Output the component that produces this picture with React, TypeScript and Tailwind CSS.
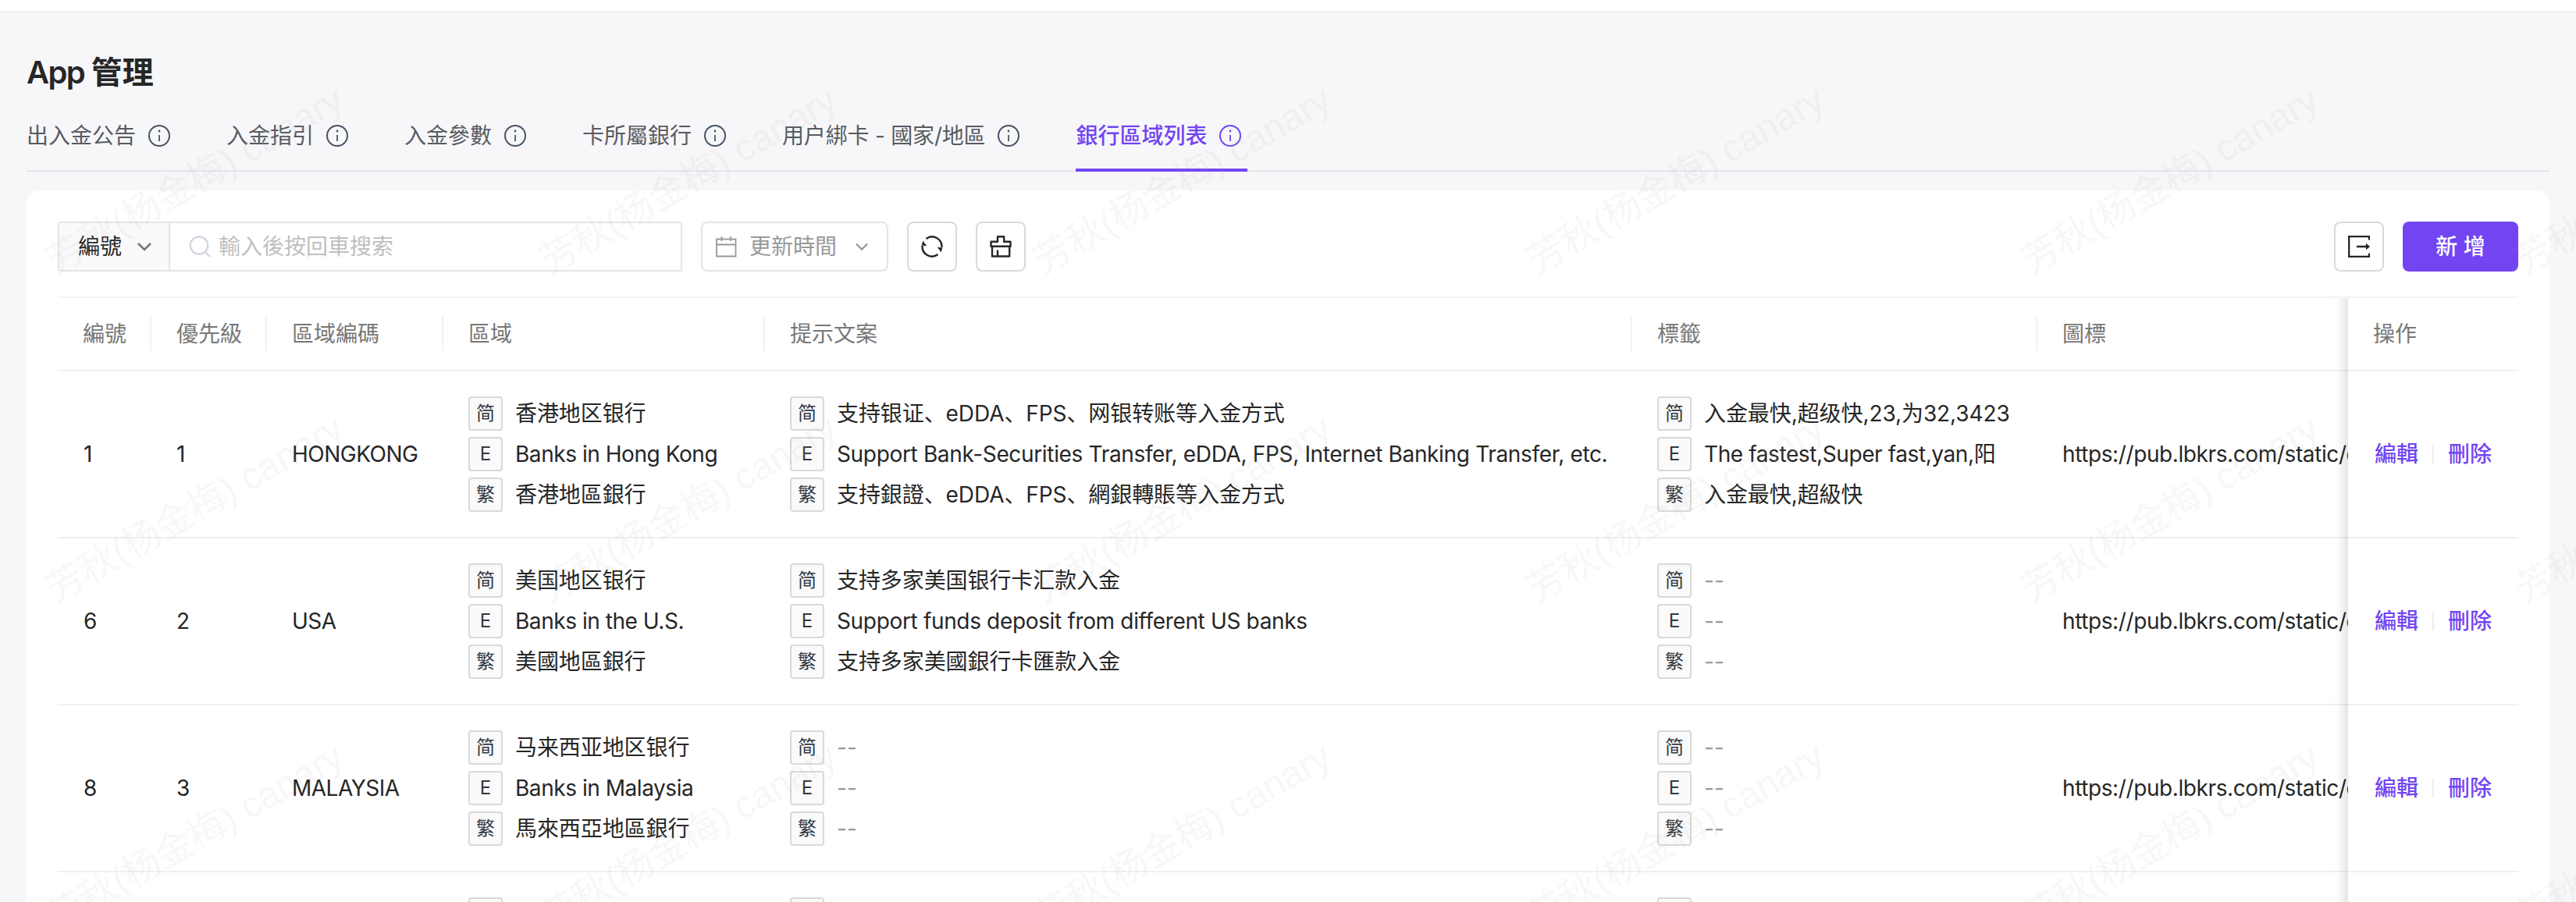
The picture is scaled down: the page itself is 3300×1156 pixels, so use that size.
import React from "react";

function InfoIcon({ className }: { className: string }) {
  return (
    <svg viewBox="0 0 28 28" className={`ml-4 mr-2 size-7 ${className}`} fill="none" stroke="currentColor" strokeWidth="2">
      <circle cx="14" cy="14" r="13" />
      <path d="M14 13v8" strokeWidth="1.8" />
      <circle cx="14" cy="8" r="1.4" fill="currentColor" stroke="none" />
    </svg>
  );
}

function ChevronDown({ className }: { className: string }) {
  return (
    <svg viewBox="0 0 18 18" className={className} fill="none" stroke="currentColor" strokeWidth="2.6">
      <path d="M1 5l8 8 8-8" />
    </svg>
  );
}

const tabs = ["出入金公告", "入金指引", "入金參數", "卡所屬銀行", "用户綁卡 - 國家/地區", "銀行區域列表"];

type Texts = [string, string, string];
type Row = { id: string; order: string; code: string; region: Texts; hint: Texts; label: Texts };

const none: Texts = ["--", "--", "--"];
const rows: Row[] = [
  {
    id: "1",
    order: "1",
    code: "HONGKONG",
    region: ["香港地区银行", "Banks in Hong Kong", "香港地區銀行"],
    hint: [
      "支持银证、eDDA、FPS、网银转账等入金方式",
      "Support Bank-Securities Transfer, eDDA, FPS, Internet Banking Transfer, etc.",
      "支持銀證、eDDA、FPS、網銀轉賬等入金方式",
    ],
    label: ["入金最快,超级快,23,为32,3423", "The fastest,Super fast,yan,阳", "入金最快,超級快"],
  },
  {
    id: "6",
    order: "2",
    code: "USA",
    region: ["美国地区银行", "Banks in the U.S.", "美國地區銀行"],
    hint: ["支持多家美国银行卡汇款入金", "Support funds deposit from different US banks", "支持多家美國銀行卡匯款入金"],
    label: none,
  },
  {
    id: "8",
    order: "3",
    code: "MALAYSIA",
    region: ["马来西亚地区银行", "Banks in Malaysia", "馬來西亞地區銀行"],
    hint: none,
    label: none,
  },
];

const langs = ["简", "E", "繁"];

function LangCell({ texts, english }: { texts: Texts; english: string }) {
  return (
    <div className="flex flex-col gap-2 pl-8">
      {texts.map((t, i) => (
        <div key={i} className="flex h-11 items-center gap-4 whitespace-nowrap">
          <span className="flex size-11 shrink-0 items-center justify-center rounded border-2 border-[#d9d9d9] bg-[#fafafa] text-2xl text-[#333842]">
            {langs[i]}
          </span>
          <span className={t === "--" ? "text-[#999]" : i === 1 ? english : "tracking-[-0.08px]"}>{t}</span>
        </div>
      ))}
    </div>
  );
}

function LangBadge() {
  return (
    <div className="pl-8">
      <div className="size-11 rounded border-2 border-[#d9d9d9] bg-[#fafafa]" />
    </div>
  );
}

const cols = "grid grid-cols-[120px_148px_226px_412px_1111px_519px_398px_218px]";

const heads = ["編號", "優先級", "區域編碼", "區域", "提示文案", "標籤", "圖標"];

export default function App() {
  return (
    <div className="relative h-[1156px] w-[3300px] overflow-hidden bg-[#f7f7fa] font-['Inter','Noto_Sans_CJK_SC',sans-serif] text-[28px] leading-[44px] text-[#262626]">
      <div className="h-4 border-b-2 border-[#f0f0f0] bg-white" />
      <main className="px-[34px]">
        <h1 className="pt-[49px] text-[40px] leading-[56px] font-semibold">
          <span className="tracking-[-1.6px]">App </span>管理
        </h1>
        <nav className="mt-[31px] flex h-[68px] gap-16 border-b-2 border-[#e6e6ea] text-[#575b61]">
          {tabs.map((t, i) => (
            <div
              key={t}
              className={
                i === 5
                  ? "flex h-[68px] items-start border-b-4 border-[#7345f2] font-medium text-[#7345f2]"
                  : "flex h-[68px] items-start"
              }
            >
              <div className="flex h-11 items-center">
                <span className={i === 4 ? "tracking-[-0.2px]" : ""}>{t}</span>
                <InfoIcon className={i === 5 ? "text-[#7345f2]" : "text-[#475467]"} />
              </div>
            </div>
          ))}
        </nav>

        <section className="mt-6 h-[940px] rounded-t-2xl bg-white px-10 pt-10">
          <div className="flex h-16">
            <div className="flex w-[800px] rounded border-2 border-[#e4e4ea]">
              <div className="flex w-[142px] items-center border-r-2 border-[#e4e4ea] bg-[#fafafa] pl-6">
                編號
                <ChevronDown className="ml-5 size-[18px] text-[#777]" />
              </div>
              <div className="flex items-center pl-6 text-[#bfbfbf]">
                <svg viewBox="0 0 28 28" className="mr-2.5 size-7 text-[#d0d4de]" fill="none" stroke="currentColor" strokeWidth="2.2">
                  <circle cx="13" cy="12.5" r="11.2" />
                  <path d="M21 21l6 6" />
                </svg>
                輸入後按回車搜索
              </div>
            </div>
            <div className="ml-6 flex w-60 items-center rounded-lg border-2 border-[#e4e4ea] pl-4 text-[#999]">
              <svg viewBox="0 0 28 28" className="size-7" fill="none" stroke="currentColor" strokeWidth="1.8">
                <path d="M2 4.500h24.500v22H2zM2 11.500h24.500M8.500 1v6M20 1v6" />
              </svg>
              <span className="ml-4">更新時間</span>
              <ChevronDown className="ml-6 size-4" />
            </div>
            <div className="ml-6 flex w-16 items-center justify-center rounded-lg border-2 border-[#d9d9d9]">
              <svg viewBox="0 0 28 28" className="size-7 overflow-visible" fill="none" stroke="currentColor" strokeWidth="2.4">
                <path d="M6.500 4A12.500 12.500 0 0 1 26.500 15M21.500 24A12.500 12.500 0 0 1 1.500 13" />
                <path d="M20.700 14.700l6.600.8-1.600 5.800zM7.300 13.300l-6.600-.8 1.600-5.800z" fill="currentColor" stroke="none" />
              </svg>
            </div>
            <div className="ml-6 flex w-16 items-center justify-center rounded-lg border-2 border-[#d9d9d9]">
              <svg viewBox="0 0 28 28" className="size-7" fill="none" stroke="currentColor" strokeWidth="2.4" strokeLinejoin="round">
                <path d="M1.500 13.800V7.800H10V1.300h8.200v6.500h8.300v6zM3 13.800v12.700h22.200V13.800M10 26.500V18.500" />
              </svg>
            </div>
            <div className="ml-auto flex w-16 items-center justify-center rounded-lg border-2 border-[#d9d9d9]">
              <svg viewBox="0 0 28 28" className="size-7" fill="none" stroke="currentColor" strokeWidth="2.3">
                <path d="M27 5.500V1.200H1.200v25.600H27V22.500M11 14h14" />
                <path d="M23 9.700l5 4.300-5 4.300z" fill="currentColor" stroke="none" />
              </svg>
            </div>
            <button className="ml-6 w-37 rounded-lg bg-[#7345f2] font-medium text-white">新 增</button>
          </div>

          <div className="relative mt-8 h-[780px] overflow-hidden border-t-2 border-[#f3f3f5]">
            <div className={`${cols} h-[94px] items-center border-b-2 border-[#f0f0f0] text-[#777]`}>
              {heads.map((h, i) => (
                <div key={h} className={i < 6 ? "h-11 border-r-2 border-[#f0f0f0] pl-8" : "h-11 pl-8"}>
                  {h}
                </div>
              ))}
              <div className="pl-8">操作</div>
            </div>
            {rows.map((r) => (
              <div key={r.id} className={`${cols} h-[214px] items-center border-b-2 border-[#f0f0f0]`}>
                <div className="pl-[33px]">{r.id}</div>
                <div className="pl-8">{r.order}</div>
                <div className="pl-8 tracking-[-0.5px]">{r.code}</div>
                <LangCell texts={r.region} english="tracking-[-0.45px]" />
                <LangCell texts={r.hint} english="tracking-[-0.34px]" />
                <LangCell texts={r.label} english="tracking-[-0.4px]" />
                <div className="overflow-hidden pl-8 tracking-[-0.4px] whitespace-nowrap">https://pub.lbkrs.com/static/c</div>
                <div className="relative z-20 flex h-full items-center bg-white pl-[34px] font-medium text-[#7345f2]">
                  編輯
                  <span className="mx-[18px] h-6 w-0.5 bg-[#ececec]" />
                  刪除
                </div>
              </div>
            ))}
            <div className={`${cols} pt-8`}>
              <div className="col-span-3" />
              <LangBadge />
              <LangBadge />
              <LangBadge />
            </div>
            <div className="absolute top-0 bottom-0 left-[2874px] z-20 w-15 shadow-[inset_-20px_0_16px_-16px_rgba(0,0,0,0.15)]" />
          </div>
        </section>
      </main>

      {/* Tiled account watermark over the page */}
      <div className="pointer-events-none absolute top-[20px] left-[-67px] z-10 grid grid-cols-[repeat(6,632.5px)] auto-rows-[421px]">
        {Array.from({ length: 18 }, (_, i) => (
          <div key={i} className="flex items-center justify-center">
            <span className="-rotate-30 font-['Liberation_Sans','Noto_Sans_CJK_SC',sans-serif] text-5xl whitespace-nowrap text-[#b0b0b0]/10">
              芳秋(杨金梅) canary
            </span>
          </div>
        ))}
      </div>
    </div>
  );
}
